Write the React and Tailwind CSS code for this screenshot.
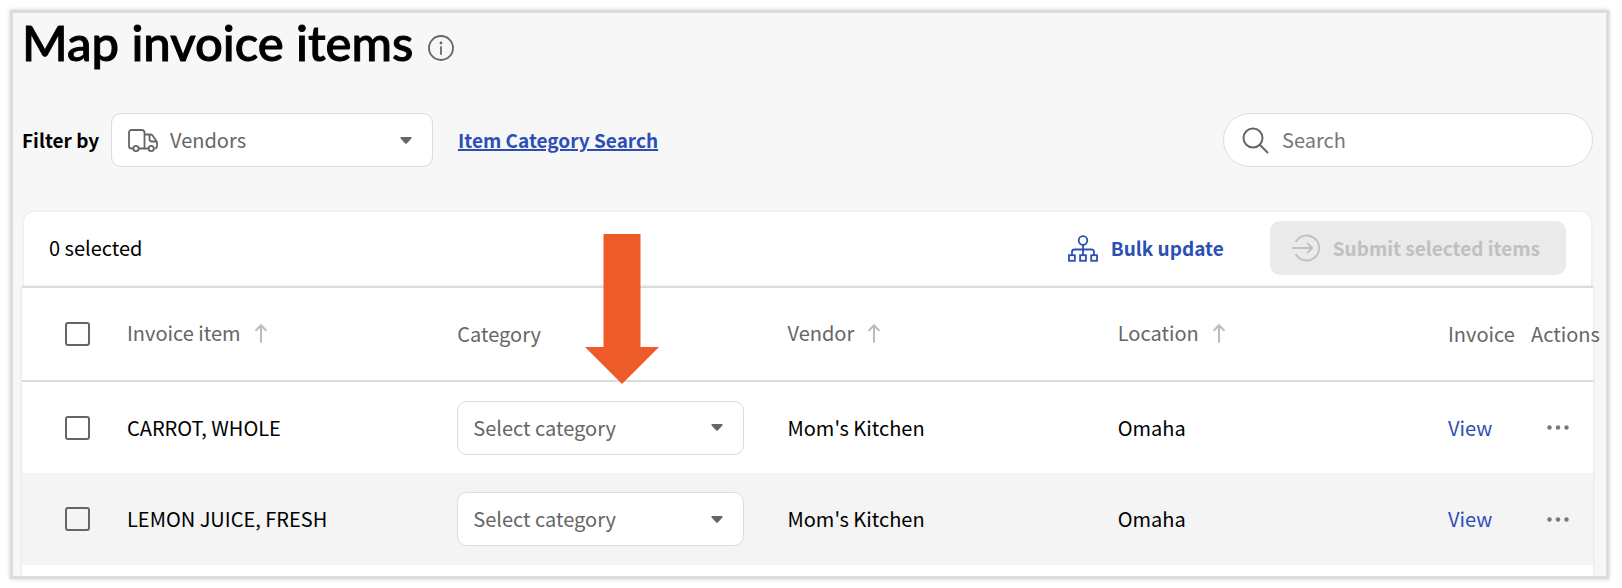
const items = [
  { id: 'carrot', name: 'CARROT, WHOLE', vendor: "Mom's Kitchen", location: 'Omaha' },
  { id: 'lemon', name: 'LEMON JUICE, FRESH', vendor: "Mom's Kitchen", location: 'Omaha' },
];

function InfoIcon() {
  return (
    <svg className="size-[26px]" viewBox="0 0 26 26" fill="none" stroke="#666" strokeWidth="1.8" strokeLinecap="round">
      <circle cx="13" cy="13" r="12" />
      <path d="M13 12v7" />
      <circle cx="13" cy="8" r="1.4" fill="#666" stroke="none" />
    </svg>
  );
}

function TruckIcon() {
  return (
    <svg className="w-[30px] h-[23px] shrink-0" viewBox="0 0 30 23" fill="none" stroke="#666" strokeWidth="1.8" strokeLinejoin="round">
      <path d="M5 19.5H3.500A2.500 2.500 0 0 1 1 17V3.500A2.500 2.500 0 0 1 3.500 1H14a2.500 2.500 0 0 1 2.500 2.500v16H11" />
      <path d="M16.500 5.500h6.200a2.500 2.500 0 0 1 2.100 1.200l3.700 5.500a3 3 0 0 1 .5 1.700V17a2.500 2.500 0 0 1-2.500 2.500M16.500 19.500H20" />
      <path d="M21.500 6v4a2.500 2.500 0 0 0 2.500 2.500h4.500" />
      <circle cx="8" cy="19.500" r="2.600" />
      <circle cx="23.200" cy="19.500" r="2.600" />
    </svg>
  );
}

function SearchIcon() {
  return (
    <svg className="size-[27px] shrink-0" viewBox="0 0 27 27" fill="none" stroke="#666" strokeWidth="2" strokeLinecap="round">
      <circle cx="11" cy="11" r="9.500" />
      <path d="M17.800 17.800l7.700 7.700" />
    </svg>
  );
}

function HierarchyIcon() {
  return (
    <svg className="w-[30px] h-[27px]" viewBox="0 0 30 27" fill="none" stroke="currentColor" strokeWidth="1.800">
      <circle cx="15" cy="5.500" r="4.300" />
      <path d="M15 9.800V20M4 20v-3a2.500 2.500 0 0 1 2.500-2.500h17A2.500 2.500 0 0 1 26 17v3" />
      <rect x="1" y="20.200" width="5.800" height="5.600" />
      <rect x="12.100" y="20.200" width="5.800" height="5.600" />
      <rect x="23.200" y="20.200" width="5.800" height="5.600" />
    </svg>
  );
}

function SubmitIcon() {
  return (
    <svg className="size-7" viewBox="0 0 28 28" fill="none" stroke="currentColor" strokeWidth="1.800" strokeLinecap="round" strokeLinejoin="round">
      <path d="M4 7.500a12.500 12.500 0 1 1 0 13" />
      <path d="M1 14h19M15.500 9.300l4.700 4.700-4.700 4.700" />
    </svg>
  );
}

function Caret() {
  return (
    <svg className="w-3 h-[7px] shrink-0 pointer-events-none" viewBox="0 0 12 7" fill="#666">
      <path d="M1.200 0h9.600a.9.900 0 0 1 .6 1.500L7 6.300a1.400 1.400 0 0 1-2 0L.6 1.500A.9.900 0 0 1 1.200 0z" />
    </svg>
  );
}

function SortArrow() {
  return (
    <svg className="w-3 h-[19px]" viewBox="0 0 12 19" fill="none" stroke="#bbb" strokeWidth="2" strokeLinecap="round" strokeLinejoin="round">
      <path d="M6 18V1.500M1.200 6.200L6 1.300l4.800 4.900" />
    </svg>
  );
}

function Checkbox({ label }) {
  return (
    <input
      type="checkbox"
      aria-label={label}
      className="appearance-none block w-[25px] h-6 ml-[43px] rounded-[3px] border-2 border-[#666] checked:bg-[#2c4fb5]"
    />
  );
}

function SortButton({ children }) {
  return (
    <button className="flex items-center gap-[14px] -mt-0.5">
      {children}
      <SortArrow />
    </button>
  );
}

function CategorySelect({ label }) {
  return (
    <div className="flex items-center w-[287px] h-[54px] pl-[15px] pr-5 bg-white border border-[#dcdcdc] rounded-[10px]">
      <select aria-label={label} className="appearance-none flex-1 h-full text-[#666] outline-none">
        <option>Select category</option>
      </select>
      <Caret />
    </div>
  );
}

function CalloutArrow() {
  return (
    <svg className="absolute left-32 -bottom-1 w-[74px] h-[150px]" viewBox="0 0 74 150" fill="#ed5b29">
      <path d="M18.500 0h37v113H74L37 150 0 113h18.500z" />
    </svg>
  );
}

function ItemRow({ item }) {
  return (
    <tr className="h-[92px] even:bg-[#f4f4f4]">
      <td><Checkbox label={`Select ${item.name}`} /></td>
      <td>{item.name}</td>
      <td><CategorySelect label={`Category for ${item.name}`} /></td>
      <td>{item.vendor}</td>
      <td>{item.location}</td>
      <td><a href="#" className="text-[#2c4fb5]">View</a></td>
      <td>
        <button aria-label="Actions" className="block ml-4">
          <svg className="w-[22px] h-[5px]" viewBox="0 0 22 5" fill="#777">
            <circle cx="2.500" cy="2.500" r="2.200" />
            <circle cx="11" cy="2.500" r="2.200" />
            <circle cx="19.500" cy="2.500" r="2.200" />
          </svg>
        </button>
      </td>
    </tr>
  );
}

export default function App() {
  return (
    <div className="h-screen bg-white pt-[13px] pl-[13px] pr-4 pb-3 text-xl text-black font-['Noto_Sans_CJK_SC',sans-serif]">
      <main className="h-full flex flex-col overflow-hidden bg-[#f7f7f7] pl-[9px] pr-[13px] shadow-[0_0_0_3px_#dcdcdc,0_0_4px_3px_#ccc]">
        <header className="flex items-center gap-[15px] h-[58px]">
          <h1 className="text-[49px] leading-[58px] font-medium font-['Lato',sans-serif] [-webkit-text-stroke:1px_black]">
            Map invoice items
          </h1>
          <button aria-label="About mapping" className="mt-3"><InfoIcon /></button>
        </header>

        <div className="flex items-center mt-[42px] pb-[45px]">
          <label htmlFor="vendors" className="w-[89px] text-[19px] font-bold">Filter by</label>
          <div className="flex items-center w-[322px] h-[54px] pl-4 pr-5 bg-white border border-[#dcdcdc] rounded-[10px]">
            <TruckIcon />
            <select id="vendors" className="appearance-none flex-1 h-full ml-3 text-[#666] outline-none">
              <option>Vendors</option>
            </select>
            <Caret />
          </div>
          <a href="#" className="ml-[25px] text-[19px] font-bold text-[#2c4fb5] underline decoration-2">Item Category Search</a>
          <div className="ml-auto flex items-center w-[370px] h-[54px] px-[18px] bg-white border border-[#dcdcdc] rounded-full">
            <SearchIcon />
            <input
              type="text"
              aria-label="Search"
              placeholder="Search"
              className="flex-1 min-w-0 ml-[13px] outline-none placeholder:text-[#777]"
            />
          </div>
        </div>

        <section className="flex-1 flex flex-col">
          <div className="mx-0.5 flex items-center h-[74px] shrink-0 px-[25px] pb-0.5 bg-white rounded-t-[10px] shadow-[0_0_3px_#ddd]">
            <span>0 selected</span>
            <button className="ml-auto flex items-center gap-[13px] text-[19px] font-bold text-[#2c4fb5]">
              <HierarchyIcon />
              Bulk update
            </button>
            <button disabled className="ml-[46px] flex items-center gap-[13px] h-[54px] pl-[22px] pr-[26px] rounded-[10px] bg-[#eaeaea] text-[19px] font-bold text-[#c0c0c0]">
              <SubmitIcon />
              Submit selected items
            </button>
          </div>

          <div className="flex-1 bg-white shadow-[0_0_3px_#ddd]">
            <table className="relative w-full table-fixed text-left">
              <colgroup>
                <col className="w-[105px]" />
                <col />
                <col />
                <col />
                <col />
                <col className="w-[83px]" />
                <col className="w-[62px]" />
              </colgroup>
              <thead>
                <tr className="h-[94px] border-y-2 border-[#dcdcdc] text-[#666] [&>th]:font-normal">
                  <th><Checkbox label="Select all items" /></th>
                  <th><SortButton>Invoice item</SortButton></th>
                  <th className="relative">
                    Category
                    <CalloutArrow />
                  </th>
                  <th><SortButton>Vendor</SortButton></th>
                  <th><SortButton>Location</SortButton></th>
                  <th>Invoice</th>
                  <th className="whitespace-nowrap">Actions</th>
                </tr>
              </thead>
              <tbody>
                {items.map((item) => (
                  <ItemRow key={item.id} item={item} />
                ))}
              </tbody>
            </table>
          </div>
        </section>
      </main>
    </div>
  );
}
